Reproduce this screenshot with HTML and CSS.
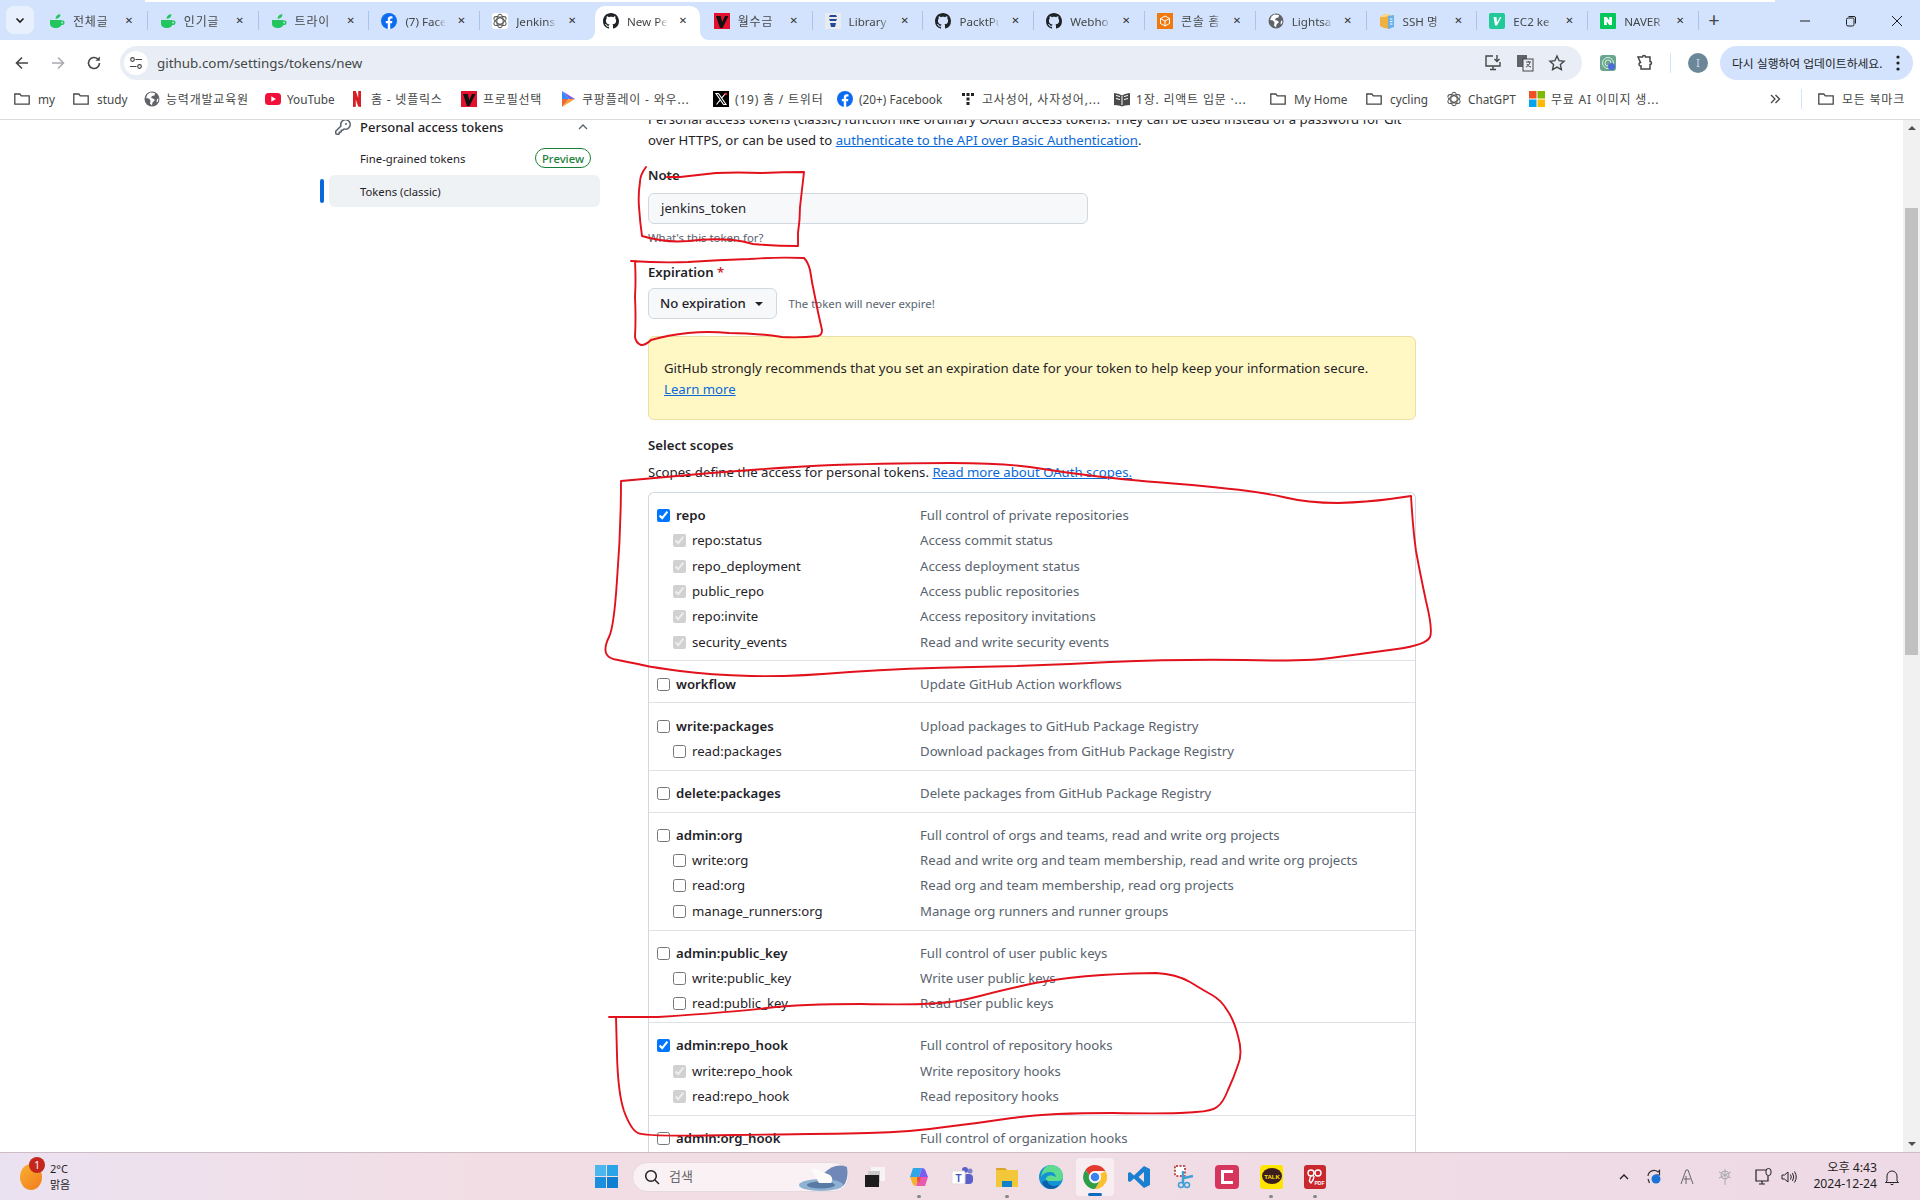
FILE: index.html
```html
<!DOCTYPE html>
<html lang="ko">
<head>
<meta charset="utf-8">
<title>New Personal Access Token</title>
<link rel="stylesheet" href="styles.css">
</head>
<body>
<svg class="defs" width="0" height="0" aria-hidden="true">
  <defs>
    <symbol id="i-gh" viewBox="0 0 16 16"><path fill="#1f2328" d="M8 0c4.42 0 8 3.58 8 8a8.013 8.013 0 0 1-5.45 7.59c-.4.08-.55-.17-.55-.38 0-.27.01-1.13.01-2.2 0-.75-.25-1.23-.54-1.48 1.78-.2 3.65-.88 3.65-3.95 0-.88-.31-1.59-.82-2.15.08-.2.36-1.02-.08-2.12 0 0-.67-.22-2.2.82-.64-.18-1.32-.27-2-.27-.68 0-1.36.09-2 .27-1.53-1.03-2.2-.82-2.2-.82-.44 1.1-.16 1.92-.08 2.12-.51.56-.82 1.28-.82 2.15 0 3.06 1.86 3.75 3.64 3.95-.23.2-.44.55-.51 1.07-.46.21-1.61.55-2.33-.66-.15-.24-.6-.83-1.23-.82-.67.01-.27.38.01.53.34.19.73.9.82 1.13.16.45.68 1.31 2.69.94 0 .67.01 1.3.01 1.49 0 .21-.15.45-.55.38A7.995 7.995 0 0 1 0 8c0-4.42 3.58-8 8-8Z"/></symbol>
    <symbol id="i-fb" viewBox="0 0 16 16"><circle cx="8" cy="8" r="8" fill="#0b6cf0"/><path fill="#fff" d="M11 10.3l.4-2.3H9.2V6.6c0-.7.3-1.2 1.3-1.2h1V3.4s-.9-.2-1.7-.2c-1.9 0-3 1.1-3 3.2V8H4.800v2.300h2v5.600a8 8 0 0 0 2.400 0v-5.600z"/></symbol>
    <symbol id="i-cup" viewBox="0 0 16 16"><path fill="#22c55e" d="M1 7h11.500v3.500c0 2.800-2.200 4.500-5.700 4.500S1 13.300 1 10.500z"/><path fill="none" stroke="#22c55e" stroke-width="1.500" d="M12.500 8.200h1.200c1.500 0 1.500 3-.2 3h-1.500"/><path fill="#22c55e" d="M6.500 5.800C6.500 3 8.500 1.200 11.500 1.200 11.500 4 9.500 5.800 6.500 5.800z"/></symbol>
    <symbol id="i-folder" viewBox="0 0 16 16"><path fill="none" stroke="#444746" stroke-width="1.300" d="M.8 3h5l1.500 1.800h7.900v8.400H.8z"/></symbol>
    <symbol id="i-globe" viewBox="0 0 16 16"><circle cx="8" cy="8" r="7.500" fill="#5f6368"/><path fill="#fff" d="M6 1.500L3.500 3.500 2 7l3 .5 1.500 2L6 12.500l2 2 .5-3 2.500-2.500L9 7.500 7 7l1-2 2.500-.5.500-2.500zM13 8l1.500-.5-.5 3-1.500 1z"/></symbol>
    <symbol id="i-yt" viewBox="0 0 16 16"><rect y="2" width="16" height="12" rx="3.500" fill="#f0103a"/><path fill="#fff" d="M6.300 5.200v5.600L11 8z"/></symbol>
    <symbol id="i-nf" viewBox="0 0 16 16"><path fill="#d81f26" d="M4 0h2.800l2.400 7V0H12v16l-2.800-.4L6.800 8.500v7.300L4 16z"/></symbol>
    <symbol id="i-v" viewBox="0 0 16 16"><rect width="16" height="16" fill="#e3102f"/><path fill="#111" d="M2 3h5v1.500L8.300 9 11 3h3.500L8.500 15H6z"/></symbol>
    <symbol id="i-play" viewBox="0 0 16 16"><path fill="#2e8df5" d="M2 0v8h7z"/><path fill="#7a5cf0" d="M2 0l13 8H9z"/><path fill="#f0683a" d="M2 16V8h7z"/><path fill="#f5a43a" d="M2 16l13-8H9z"/></symbol>
    <symbol id="i-x" viewBox="0 0 16 16"><rect width="16" height="16" fill="#000"/><path fill="none" stroke="#fff" stroke-width="1.100" d="M3 2.500h2.500l7.500 11h-2.500zM12.500 2.500L8.800 6.800M7 9.200l-3.500 4.300"/><circle cx="12.800" cy="3" r="1.300" fill="#e23"/></symbol>
    <symbol id="i-dots" viewBox="0 0 16 16"><g fill="#222"><rect x="2" y="2" width="3" height="3"/><rect x="6.500" y="2" width="3" height="3"/><rect x="11" y="2" width="3" height="3"/><rect x="6.500" y="6.500" width="3" height="3"/><rect x="6.500" y="11" width="3" height="3"/></g></symbol>
    <symbol id="i-book" viewBox="0 0 16 16"><path fill="#4a4a4a" d="M0 2l5 1 3 1.500L11 3l5-1v12l-5 .5-3 1-3-1L0 14z"/><path fill="none" stroke="#fff" stroke-width="1" d="M2 4.500l4 1M2 7.500l4 1M10 5.500l4-1M10 8.500l4-1M8 5v9"/></symbol>
    <symbol id="i-gpt" viewBox="0 0 16 16"><g fill="none" stroke="#555" stroke-width="1.100"><ellipse cx="8" cy="8" rx="3.200" ry="6.800"/><ellipse cx="8" cy="8" rx="3.200" ry="6.800" transform="rotate(60 8 8)"/><ellipse cx="8" cy="8" rx="3.200" ry="6.800" transform="rotate(120 8 8)"/></g></symbol>
    <symbol id="i-ms" viewBox="0 0 16 16"><rect width="7.500" height="7.500" fill="#f25022"/><rect x="8.500" width="7.500" height="7.500" fill="#7fba00"/><rect y="8.500" width="7.500" height="7.500" fill="#00a4ef"/><rect x="8.500" y="8.500" width="7.500" height="7.500" fill="#ffb900"/></symbol>
    <symbol id="i-key" viewBox="0 0 16 16"><path fill="#59636e" d="M10.500 0a5.499 5.499 0 1 1-1.288 10.848l-.932.932a.749.749 0 0 1-.53.22H7v.75a.749.749 0 0 1-.22.53l-.5.5a.749.749 0 0 1-.53.22H5v.75a.749.749 0 0 1-.22.53l-.5.5a.749.749 0 0 1-.53.22h-2A1.750 1.750 0 0 1 0 14.250v-2c0-.199.079-.389.22-.53l4.932-4.932A5.500 5.500 0 0 1 10.500 0Zm-4 5.500c-.001.431.069.86.205 1.269a.75.75 0 0 1-.181.768L1.500 12.560v1.690c0 .138.112.25.25.25h1.690l.06-.06v-1.190a.75.75 0 0 1 .75-.75h1.190l.06-.06v-1.190a.75.75 0 0 1 .75-.75h1.190l1.023-1.025a.75.75 0 0 1 .768-.18A4 4 0 1 0 6.500 5.500ZM11 6a1 1 0 1 1 0-2 1 1 0 0 1 0 2Z"/></symbol>
  </defs>
</svg>

<div class="app">
  <header class="tabstrip">
    <button class="tabs-menu"><svg width="12" height="12" viewBox="0 0 12 12"><path d="M2.500 4.500L6 8l3.500-3.500" fill="none" stroke="#1f1f1f" stroke-width="1.600"/></svg></button>
    <div class="tab"><svg class="fav"><use href="#i-cup"/></svg><span class="tab-title ko">전체글</span><span class="tab-x">✕</span></div>
    <div class="tab"><svg class="fav"><use href="#i-cup"/></svg><span class="tab-title ko">인기글</span><span class="tab-x">✕</span></div>
    <div class="tab"><svg class="fav"><use href="#i-cup"/></svg><span class="tab-title ko">트라이</span><span class="tab-x">✕</span></div>
    <div class="tab"><svg class="fav"><use href="#i-fb"/></svg><span class="tab-title">(7) Face</span><span class="tab-x">✕</span></div>
    <div class="tab no-sep"><span class="fav-bg"><svg class="fav"><use href="#i-gpt"/></svg></span><span class="tab-title">Jenkins</span><span class="tab-x">✕</span></div>
    <div class="tab active no-sep"><span class="tab-shape"></span><svg class="fav"><use href="#i-gh"/></svg><span class="tab-title">New Pe</span><span class="tab-x">✕</span></div>
    <div class="tab"><svg class="fav"><use href="#i-v"/></svg><span class="tab-title ko">월수금</span><span class="tab-x">✕</span></div>
    <div class="tab"><svg class="fav" viewBox="0 0 16 16"><rect width="16" height="16" fill="#e9ecef"/><path fill="#24469b" d="M5 2h6l1 2H4zM4 6h8l-1 2H5zM5 10h6l-1 4H6z"/></svg><span class="tab-title">Library</span><span class="tab-x">✕</span></div>
    <div class="tab"><svg class="fav"><use href="#i-gh"/></svg><span class="tab-title">PacktPu</span><span class="tab-x">✕</span></div>
    <div class="tab"><svg class="fav"><use href="#i-gh"/></svg><span class="tab-title">Webho</span><span class="tab-x">✕</span></div>
    <div class="tab"><svg class="fav" viewBox="0 0 16 16"><rect width="16" height="16" fill="#f0780f"/><path fill="none" stroke="#fff" stroke-width="1" d="M8 3l4.500 2.500v5L8 13l-4.500-2.500v-5zM3.500 5.500L8 8l4.500-2.500M8 8v5"/></svg><span class="tab-title ko">콘솔 홈</span><span class="tab-x">✕</span></div>
    <div class="tab"><svg class="fav"><use href="#i-globe"/></svg><span class="tab-title">Lightsa</span><span class="tab-x">✕</span></div>
    <div class="tab"><svg class="fav" viewBox="0 0 16 16"><path fill="#f0b040" d="M1 4l5-3 5 1v14l-6-1-4-2z"/><path fill="#fcd98a" d="M1 4l5-3 5 1-5 2z"/><path fill="#6ab0e8" d="M9 3l6-1v12l-6 2z"/><path stroke="#fff" fill="none" d="M11 6h2.500M11 8.500h2.500M11 11h2.500"/></svg><span class="tab-title">SSH 명</span><span class="tab-x">✕</span></div>
    <div class="tab"><svg class="fav" viewBox="0 0 16 16"><rect width="16" height="16" rx="2" fill="#20c997"/><path fill="#fff" d="M4.500 4h3l.5 5.500L11 4h1.500L8 12.500H6z"/></svg><span class="tab-title">EC2 ke</span><span class="tab-x">✕</span></div>
    <div class="tab"><svg class="fav" viewBox="0 0 16 16"><rect width="16" height="16" rx="1" fill="#03c75a"/><path fill="#fff" d="M4 4h2.800l2.400 3.500V4H12v8H9.200L6.800 8.500V12H4z"/></svg><span class="tab-title">NAVER</span><span class="tab-x">✕</span></div>
    <span class="tab-new">+</span>
    <div class="window-controls">
      <svg width="12" height="12" viewBox="0 0 12 12"><path d="M1 6h10" stroke="#1f1f1f"/></svg>
      <svg width="12" height="12" viewBox="0 0 12 12"><rect x="1.500" y="3" width="7.500" height="8" rx="1.500" fill="none" stroke="#1f1f1f"/><path d="M3.500 1.500h5.500a1.500 1.500 0 0 1 1.500 1.500v5.500" fill="none" stroke="#1f1f1f"/></svg>
      <svg width="12" height="12" viewBox="0 0 12 12"><path d="M1 1l10 10M11 1L1 11" stroke="#1f1f1f"/></svg>
    </div>
  </header>

  <nav class="toolbar">
    <div class="nav-btns">
      <svg width="16" height="16" viewBox="0 0 16 16"><path d="M14 8H2.500M8 2.500L2.500 8 8 13.500" fill="none" stroke="#444746" stroke-width="1.600"/></svg>
      <svg width="16" height="16" viewBox="0 0 16 16"><path d="M2 8h11.500M8 2.500L13.500 8 8 13.500" fill="none" stroke="#a8abaf" stroke-width="1.600"/></svg>
      <svg width="16" height="16" viewBox="0 0 16 16"><path d="M13.500 8a5.500 5.500 0 1 1-1.700-4" fill="none" stroke="#444746" stroke-width="1.600"/><path d="M13.800 1.500v4.300H9.500z" fill="#444746"/></svg>
    </div>
    <div class="omnibox">
      <span class="site-info"><svg width="14" height="14" viewBox="0 0 14 14"><g fill="none" stroke="#444746" stroke-width="1.200"><circle cx="3.500" cy="3.500" r="1.800"/><path d="M6.500 3.500H13M1 10.500h6.500"/><circle cx="10.500" cy="10.500" r="1.800"/></g></svg></span>
      <span class="url">github.com/settings/tokens/new</span>
      <span class="omni-actions">
        <svg width="18" height="18" viewBox="0 0 18 18"><path d="M9 2H2v10h14V8M6 15.500h6M9 12v3.500" fill="none" stroke="#444746" stroke-width="1.400"/><path d="M13 1v6M10.500 5L13 7.500 15.500 5" fill="none" stroke="#444746" stroke-width="1.400"/></svg>
        <svg width="18" height="18" viewBox="0 0 18 18"><rect x="1" y="1" width="10" height="12" fill="#5f6368"/><rect x="7" y="5" width="10" height="12" fill="#e9eef6" stroke="#444746"/><path d="M10 8h5M12.500 7v1M14 8c-.5 2.500-2 4-4 5M11 10c.5 1.500 2 2.500 4 3" fill="none" stroke="#444746"/></svg>
        <svg width="18" height="18" viewBox="0 0 18 18"><path d="M9 2l2.100 4.700 5 .5-3.700 3.400 1 5L9 13.100 4.600 15.600l1-5L1.900 7.200l5-.5z" fill="none" stroke="#444746" stroke-width="1.400"/></svg>
      </span>
    </div>
    <div class="tool-right">
      <svg class="ext" width="16" height="16" viewBox="0 0 16 16"><rect width="16" height="16" rx="3" fill="#6aa58e"/><g fill="none" stroke="#d8efe6"><circle cx="8" cy="8" r="5.500"/><circle cx="8" cy="8" r="3"/></g><circle cx="11.500" cy="11.500" r="3.500" fill="#4f6bd8"/></svg>
      <svg class="puzzle" width="18" height="18" viewBox="0 0 18 18"><path d="M3 3h4.500c0-2 3-2 3 0H15v4.500c2 0 2 3 0 3V15H6v-3c-2 .5-3-3-.5-3.500L3 3z" fill="none" stroke="#444746" stroke-width="1.500"/></svg>
      <span class="tool-sep"></span>
      <span class="avatar">I</span>
      <span class="update">다시 실행하여 업데이트하세요.<svg width="4" height="16" viewBox="0 0 4 16"><g fill="#1f1f1f"><circle cx="2" cy="2" r="1.600"/><circle cx="2" cy="8" r="1.600"/><circle cx="2" cy="14" r="1.600"/></g></svg></span>
    </div>
  </nav>

  <nav class="bookmarks">
    <span class="bm bm-f"><svg class="fav"><use href="#i-folder"/></svg>my</span>
    <span class="bm bm-f"><svg class="fav"><use href="#i-folder"/></svg>study</span>
    <span class="bm ko"><svg class="fav"><use href="#i-globe"/></svg>능력개발교육원</span>
    <span class="bm"><svg class="fav"><use href="#i-yt"/></svg>YouTube</span>
    <span class="bm ko"><svg class="fav"><use href="#i-nf"/></svg>홈 - 넷플릭스</span>
    <span class="bm ko"><svg class="fav"><use href="#i-v"/></svg>프로필선택</span>
    <span class="bm ko"><svg class="fav"><use href="#i-play"/></svg>쿠팡플레이 - 와우...</span>
    <span class="bm ko"><svg class="fav"><use href="#i-x"/></svg>(19) 홈 / 트위터</span>
    <span class="bm"><svg class="fav"><use href="#i-fb"/></svg>(20+) Facebook</span>
    <span class="bm ko"><svg class="fav"><use href="#i-dots"/></svg>고사성어, 사자성어,...</span>
    <span class="bm ko"><svg class="fav"><use href="#i-book"/></svg>1장. 리액트 입문 ·...</span>
    <span class="bm bm-f"><svg class="fav"><use href="#i-folder"/></svg>My Home</span>
    <span class="bm bm-f"><svg class="fav"><use href="#i-folder"/></svg>cycling</span>
    <span class="bm"><svg class="fav"><use href="#i-gpt"/></svg>ChatGPT</span>
    <span class="bm ko"><svg class="fav"><use href="#i-ms"/></svg>무료 AI 이미지 생...</span>
    <svg class="bm-more" width="12" height="12" viewBox="0 0 12 12"><path d="M2 2l4 4-4 4M6.500 2l4 4-4 4" fill="none" stroke="#444746" stroke-width="1.300"/></svg>
    <span class="bm-sep"></span>
    <span class="bm bm-f ko"><svg class="fav"><use href="#i-folder"/></svg>모든 북마크</span>
  </nav>

  <div class="viewport">
    <main class="page">
      <aside class="sidenav">
        <div class="side-row side-parent">
          <svg class="key"><use href="#i-key"/></svg>
          <span class="side-title">Personal access tokens</span>
          <svg class="chev" width="12" height="12" viewBox="0 0 12 12"><path d="M2 8l4-4 4 4" fill="none" stroke="#59636e" stroke-width="1.300"/></svg>
        </div>
        <div class="side-row">Fine-grained tokens<span class="pill">Preview</span></div>
        <div class="side-row current">Tokens (classic)</div>
      </aside>

      <section class="content">
        <p class="intro">Personal access tokens (classic) function like ordinary OAuth access tokens. They can be used instead of a password for Git<br>over HTTPS, or can be used to <a href="#">authenticate to the API over Basic Authentication</a>.</p>

        <label class="field-label note-label">Note</label>
        <div class="input">jenkins_token</div>
        <p class="hint">What's this token for?</p>

        <label class="field-label exp-label">Expiration <span class="req">*</span></label>
        <div class="exp-row">
          <div class="select">No expiration<span class="caret"></span></div>
          <span class="hint-inline">The token will never expire!</span>
        </div>

        <div class="flash">GitHub strongly recommends that you set an expiration date for your token to help keep your information secure.<br><a href="#">Learn more</a></div>

        <h3 class="scopes-title">Select scopes</h3>
        <p class="scopes-desc">Scopes define the access for personal tokens. <a href="#">Read more about OAuth scopes.</a></p>

        <div class="scopes">
          <div class="group">
            <div class="row head"><span class="name"><input type="checkbox" checked>repo</span><span class="desc">Full control of private repositories</span></div>
            <div class="row sub"><span class="name"><input type="checkbox" checked disabled>repo:status</span><span class="desc">Access commit status</span></div>
            <div class="row sub"><span class="name"><input type="checkbox" checked disabled>repo_deployment</span><span class="desc">Access deployment status</span></div>
            <div class="row sub"><span class="name"><input type="checkbox" checked disabled>public_repo</span><span class="desc">Access public repositories</span></div>
            <div class="row sub"><span class="name"><input type="checkbox" checked disabled>repo:invite</span><span class="desc">Access repository invitations</span></div>
            <div class="row sub"><span class="name"><input type="checkbox" checked disabled>security_events</span><span class="desc">Read and write security events</span></div>
          </div>
          <div class="group">
            <div class="row head"><span class="name"><input type="checkbox">workflow</span><span class="desc">Update GitHub Action workflows</span></div>
          </div>
          <div class="group">
            <div class="row head"><span class="name"><input type="checkbox">write:packages</span><span class="desc">Upload packages to GitHub Package Registry</span></div>
            <div class="row sub"><span class="name"><input type="checkbox">read:packages</span><span class="desc">Download packages from GitHub Package Registry</span></div>
          </div>
          <div class="group">
            <div class="row head"><span class="name"><input type="checkbox">delete:packages</span><span class="desc">Delete packages from GitHub Package Registry</span></div>
          </div>
          <div class="group">
            <div class="row head"><span class="name"><input type="checkbox">admin:org</span><span class="desc">Full control of orgs and teams, read and write org projects</span></div>
            <div class="row sub"><span class="name"><input type="checkbox">write:org</span><span class="desc">Read and write org and team membership, read and write org projects</span></div>
            <div class="row sub"><span class="name"><input type="checkbox">read:org</span><span class="desc">Read org and team membership, read org projects</span></div>
            <div class="row sub"><span class="name"><input type="checkbox">manage_runners:org</span><span class="desc">Manage org runners and runner groups</span></div>
          </div>
          <div class="group">
            <div class="row head"><span class="name"><input type="checkbox">admin:public_key</span><span class="desc">Full control of user public keys</span></div>
            <div class="row sub"><span class="name"><input type="checkbox">write:public_key</span><span class="desc">Write user public keys</span></div>
            <div class="row sub"><span class="name"><input type="checkbox">read:public_key</span><span class="desc">Read user public keys</span></div>
          </div>
          <div class="group">
            <div class="row head"><span class="name"><input type="checkbox" checked>admin:repo_hook</span><span class="desc">Full control of repository hooks</span></div>
            <div class="row sub"><span class="name"><input type="checkbox" checked disabled>write:repo_hook</span><span class="desc">Write repository hooks</span></div>
            <div class="row sub"><span class="name"><input type="checkbox" checked disabled>read:repo_hook</span><span class="desc">Read repository hooks</span></div>
          </div>
          <div class="group">
            <div class="row head"><span class="name"><input type="checkbox">admin:org_hook</span><span class="desc">Full control of organization hooks</span></div>
          </div>
        </div>
      </section>
    </main>
    <div class="scrollbar">
      <span class="arrow-up"></span>
      <span class="thumb"></span>
      <span class="arrow-down"></span>
    </div>
  </div>

  <footer class="taskbar">
    <div class="weather">
      <span class="sun"><span class="badge">1</span></span>
      <span class="weather-text"><span>2°C</span><span>맑음</span></span>
    </div>
    <div class="task-center">
      <svg class="start" width="23" height="23" viewBox="0 0 23 23"><rect width="11" height="11" fill="#4cb6ee"/><rect x="12" width="11" height="11" fill="#2ba3e8"/><rect y="12" width="11" height="11" fill="#1a8fdd"/><rect x="12" y="12" width="11" height="11" fill="#0f7fd3"/></svg>
      <div class="search">
        <svg width="16" height="16" viewBox="0 0 16 16"><circle cx="7" cy="7" r="5.300" fill="none" stroke="#1f1f1f" stroke-width="1.500"/><path d="M11 11l4 4" stroke="#1f1f1f" stroke-width="1.500"/></svg>
        <span class="search-text">검색</span>
        <svg class="bear" width="50" height="30" viewBox="0 0 50 30"><path d="M24 12Q36 0 48 5 50 18 44 24H24z" fill="#7088b8"/><ellipse cx="22" cy="23" rx="22" ry="6" fill="#8fb2d2"/><ellipse cx="22" cy="23" rx="14" ry="3.500" fill="#5a7aa6"/><path d="M12 8q4-3 7 0l12 5q4 4 1 8H20q-3-6-8-13z" fill="#fdfbf8"/></svg>
      </div>
      <div class="apps">
        <span class="app-ico"><svg width="24" height="24" viewBox="0 0 24 24"><rect x="8" y="2" width="14" height="14" fill="#f6f4f5"/><rect x="5" y="6" width="12" height="12" fill="#c9c9c9"/><rect x="2" y="10" width="14" height="12" fill="#1d1d1d"/></svg></span>
        <span class="app-ico running"><svg width="24" height="24" viewBox="0 0 24 24"><path d="M6 3h9l-3 9H3z" fill="#2fa6e8"/><path d="M9 21h9l3-9h-9z" fill="#e85ab0"/><path d="M15 3q3 0 4 4l2 5h-9z" fill="#7a5cf0"/><path d="M9 21q-3 0-4-4l-2-5h9z" fill="#f5b02e"/><path d="M10 12h4l-2 6-2-2z" fill="#f0503a"/></svg></span>
        <span class="app-ico"><svg width="24" height="24" viewBox="0 0 24 24"><circle cx="19" cy="6" r="2.500" fill="#7b83c9"/><circle cx="14" cy="5" r="3" fill="#5b5fc7"/><rect x="12" y="9" width="10" height="10" rx="4" fill="#5b5fc7"/><rect x="1" y="6" width="13" height="13" rx="1.500" fill="#fff" stroke="#ddd"/><text class="teams-t" x="7.500" y="16.500">T</text></svg></span>
        <span class="app-ico running"><svg width="24" height="24" viewBox="0 0 24 24"><path d="M1 3h9l2 2h11v17H1z" fill="#f3c73a"/><path d="M1 3h9l2 2H1z" fill="#d9a52c"/><rect x="7" y="16" width="10" height="6" fill="#0f82c9"/></svg></span>
        <span class="app-ico"><svg width="24" height="24" viewBox="0 0 24 24"><circle cx="12" cy="12" r="12" fill="#1493d4"/><path d="M12 0a12 12 0 0 1 12 12q0 4-5 4H9q-3 0-2-3 3-5 10-1-1-5-6-5-6 0-9 5Q4 0 12 0z" fill="#5ddc8f"/><path d="M8 15q1 6 8 6l4-1q-3 4-8 4-7 0-9-7z" fill="#0c5ea6"/></svg></span>
        <span class="app-ico active-app"><svg width="24" height="24" viewBox="0 0 24 24"><path d="M12 0a12 12 0 0 1 10.400 6H12a6 6 0 0 0-5.700 4L2.400 5A12 12 0 0 1 12 0z" fill="#e33b2e"/><path d="M22.400 6A12 12 0 0 1 12 24l5.200-9a6 6 0 0 0 0-6z" fill="#fbc02d"/><path d="M2.400 5A12 12 0 0 0 12 24l5.200-9A6 6 0 0 1 6.300 10z" fill="#2e9e49"/><circle cx="12" cy="12" r="5.500" fill="#fff"/><circle cx="12" cy="12" r="4.300" fill="#3b82f0"/></svg></span>
        <span class="app-ico"><svg width="24" height="24" viewBox="0 0 24 24"><path d="M17 1l6 3v16l-6 3L7 13.500 3 17l-2-1V8l2-1 4 3.500zM17 7l-5.500 5 5.500 5z" fill="#1a7fd0"/></svg></span>
        <span class="app-ico"><svg width="24" height="24" viewBox="0 0 24 24"><rect x="4" y="1" width="10" height="10" rx="1" fill="#fff" stroke="#c0504d" stroke-width="2" stroke-dasharray="2 1.500"/><path d="M12 6v12M13 13l9-2" stroke="#3fa0d8" stroke-width="2.500" fill="none"/><circle cx="10" cy="20" r="2.500" fill="none" stroke="#3fa0d8" stroke-width="1.500"/><circle cx="16" cy="20" r="2.500" fill="none" stroke="#3fa0d8" stroke-width="1.500"/></svg></span>
        <span class="app-ico"><svg width="24" height="24" viewBox="0 0 24 24"><rect width="24" height="24" rx="4" fill="#d6365c"/><path d="M18 8H9v8h9v3H6V5h12z" fill="#fff"/></svg></span>
        <span class="app-ico running"><svg width="24" height="24" viewBox="0 0 24 24"><rect x="1" width="24" height="24" rx="4" fill="#fee500"/><ellipse cx="13" cy="11" rx="10" ry="8" fill="#3c1e1e"/><text class="talk-t" x="13" y="13.500">TALK</text></svg></span>
        <span class="app-ico running"><svg width="24" height="24" viewBox="0 0 24 24"><rect x="1" width="22" height="24" rx="3" fill="#c8282e"/><g fill="none" stroke="#fff" stroke-width="1.400"><circle cx="8" cy="8" r="3"/><circle cx="15" cy="8" r="3"/><path d="M8 11q-3 5 0 7 3-3 3-7"/></g><text class="pdf-t" x="16.500" y="20">PDF</text></svg></span>
      </div>
    </div>
    <div class="tray">
      <svg class="tray-chev" width="12" height="12" viewBox="0 0 12 12"><path d="M2 8l4-4 4 4" fill="none" stroke="#1f1f1f" stroke-width="1.300"/></svg>
      <svg width="18" height="18" viewBox="0 0 18 18"><path d="M3 8a6 6 0 0 1 10-4l1.500-1.500V7h-4M3 11l1.500 4" fill="none" stroke="#333" stroke-width="1.200"/><circle cx="11" cy="11" r="4.500" fill="#1a73d8"/></svg>
      <svg class="tray-a" width="16" height="18" viewBox="0 0 16 18"><path d="M2 16L7 2h2l5 14M4.500 11h7M7 16V8" fill="none" stroke="#666" stroke-width="1"/></svg>
      <svg class="tray-gem" width="16" height="18" viewBox="0 0 16 18"><g fill="none" stroke="#aaa"><circle cx="8" cy="7" r="4"/><path d="M8 1v16M2 4l12 6M14 4L2 10"/></g></svg>
      <svg class="tray-net" width="20" height="18" viewBox="0 0 20 18"><path d="M12 2H2v11h12V8M5 16h6M8 13v3" fill="none" stroke="#222" stroke-width="1.200"/><rect x="12" y="0.500" width="5" height="7" rx="2.500" fill="#f3dde8" stroke="#222"/></svg>
      <svg class="tray-vol" width="18" height="18" viewBox="0 0 18 18"><path d="M2 7v4h2.500L8 14V4L4.500 7zM10.500 6.500q1.500 2.500 0 5M12.500 5q2.500 4 0 8M14.500 3.500q3.500 5.500 0 11" fill="none" stroke="#222"/></svg>
      <div class="clock"><span>오후 4:43</span><span>2024-12-24</span></div>
      <svg class="bell" width="16" height="18" viewBox="0 0 16 18"><path d="M3 13V8a5 5 0 0 1 10 0v5l1.500 1.500h-13zM6.500 16q1.500 1.500 3 0" fill="none" stroke="#222"/></svg>
    </div>
  </footer>

  <svg class="scribbles" width="1920" height="1200" viewBox="0 0 1920 1200" aria-hidden="true">
    <path d="M646 167Q640 175 640 182Q638 195 639 207Q640 222 642 236Q665 243 688 241Q711 238 733 240Q743 241 753 244Q775 246 798 246L798 233Q800 220 800 207Q802 190 804 172Q782 172 761 173Q738 172 716 173Q698 175 680 177L667 177"/>
    <path d="M631 261Q660 263 688 262Q718 260 749 259Q776 257 804 258Q808 262 810 270Q812 283 815 297Q818 313 822 330Q822 335 818 336Q800 338 782 337Q755 333 729 333Q708 331 688 333Q668 335 651 340Q646 345 641 345Q636 343 635 337Q636 317 635 297Q636 280 635 261"/>
    <path d="M621 481L666 477Q765 468 833 465Q902 463 951 463Q1000 463 1030 467Q1061 472 1094 476Q1127 480 1192 485Q1258 491 1283 497Q1308 503 1338 503Q1368 502 1390 499L1411 496Q1413 530 1416 551Q1420 573 1426 601Q1433 630 1430 637Q1426 645 1397 649Q1368 653 1338 657Q1308 662 1244 660Q1181 659 1110 662Q1039 666 973 667Q907 668 850 672Q792 677 751 676Q710 675 680 671Q649 667 638 664Q627 662 618 660Q608 659 606 653Q604 647 609 637Q614 627 617 580Q621 530 621 481"/>
    <path d="M609 1017L658 1017Q734 1012 767 1008Q801 1004 861 1004Q921 1005 939 1003Q957 1002 980 996Q1002 990 1035 983Q1069 977 1102 975Q1136 973 1156 973Q1176 974 1190 982Q1203 990 1212 995Q1221 1000 1227 1010Q1234 1020 1238 1036Q1243 1053 1238 1065Q1234 1077 1228 1090Q1223 1103 1217 1107Q1212 1111 1196 1112Q1180 1114 1113 1113Q1046 1113 1012 1118Q979 1123 945 1127Q912 1132 868 1133Q823 1134 734 1135Q645 1137 638 1133Q631 1130 624 1111Q618 1093 617 1055L616 1017"/>
  </svg>
</div>
</body>
</html>
```

FILE: styles.css
```css
* { box-sizing: border-box; }
html, body { margin: 0; height: 1200px; overflow: hidden; background: #fff; }
body {
  font-family: "Noto Sans", "Noto Sans CJK KR", sans-serif;
  font-size: 13.2px;
  line-height: 21px;
  color: #1f2328;
}
.defs { position: absolute; }
.app { position: relative; display: flex; flex-direction: column; width: 1920px; height: 1200px; }
.fav { width: 16px; height: 16px; flex: none; }
.ko { font-size: 12px; letter-spacing: .8px; }

/* tab strip */
.tabstrip {
  display: flex; align-items: flex-start; flex: none; height: 40px; padding: 6px 0 0 6px;
  background: linear-gradient(#fff, #fff) 145px 0 / 1630px 2px no-repeat, #d3e3fd;
}
.tabs-menu {
  width: 28px; height: 28px; margin-right: 3px; padding: 0; border: 0; border-radius: 8px; background: #e8f0fe;
  display: flex; align-items: center; justify-content: center; flex: none;
}
.tab {
  position: relative; display: flex; align-items: center; width: 110.8px; height: 30px; padding-left: 12px; flex: none;
  font-size: 11.6px; color: #444746;
}
.tab::after {
  content: ""; position: absolute; right: 0; top: 5px; width: 1px; height: 19px; background: #a9c3ea;
}
.tab.no-sep::after { display: none; }
.tab.active { z-index: 1; }
.tab-shape {
  position: absolute; left: 4px; right: 2px; top: 0; height: 34px; background: #fff; border-radius: 10px 10px 0 0; z-index: -1;
}
.tab-shape::before, .tab-shape::after {
  content: ""; position: absolute; bottom: 0; width: 8px; height: 8px;
}
.tab-shape::before { left: -8px; background: radial-gradient(circle at 0 0, transparent 7.5px, #fff 8px); }
.tab-shape::after { right: -8px; background: radial-gradient(circle at 100% 0, transparent 7.5px, #fff 8px); }
.fav-bg { display: flex; width: 16px; height: 16px; background: #fff; border-radius: 3px; flex: none; }
.tab-title {
  width: 41px; margin-left: 8px; white-space: nowrap; overflow: hidden; flex: none;
  -webkit-mask-image: linear-gradient(90deg, #000 75%, transparent);
  mask-image: linear-gradient(90deg, #000 75%, transparent);
}
.tab-x { width: 12px; margin-left: 9px; font-size: 10px; line-height: 12px; color: #333; text-align: center; font-weight: 700; flex: none; font-family: "DejaVu Sans", sans-serif; }
.tab-new { margin-left: 5px; width: 20px; font-size: 20px; line-height: 28px; text-align: center; color: #444746; flex: none; }
.window-controls { display: flex; gap: 34px; align-items: center; margin-left: auto; height: 30px; padding-right: 17px; }

/* toolbar */
.toolbar {
  display: flex; align-items: center; flex: none; height: 42px; padding: 6px 7px 2px 14px; background: #fff; border-radius: 10px 10px 0 0;
}
.nav-btns { display: flex; gap: 20px; align-items: center; width: 106px; flex: none; }
.omnibox {
  display: flex; align-items: center; width: 1462px; height: 34px; padding: 0 16px 0 4px; background: #e9eef6; border-radius: 17px; flex: none;
}
.site-info { display: flex; align-items: center; justify-content: center; width: 24px; height: 24px; background: #fff; border-radius: 50%; flex: none; }
.url { margin-left: 9px; font-size: 13.4px; color: #444746; }
.omni-actions { display: flex; gap: 14px; margin-left: auto; align-items: center; }
.tool-right { display: flex; align-items: center; flex: 1; padding-left: 18px; }
.puzzle { margin-left: 19px; }
.tool-sep { width: 1px; height: 20px; background: #d3e3fd; margin-left: 17px; }
.avatar {
  display: flex; align-items: center; justify-content: center; width: 20px; height: 20px; margin-left: 17px; border-radius: 50%;
  background: #6c8798; color: #dde; font-size: 10px; line-height: 1;
}
.update {
  display: flex; align-items: center; justify-content: space-between; width: 193px; height: 34px; margin-left: 12px; padding: 0 13px 0 12px;
  background: #d3e3fd; border-radius: 17px; font-size: 11.8px; color: #1f1f1f; white-space: nowrap;
}

/* bookmarks */
.bookmarks {
  display: grid; align-items: center; flex: none; height: 38px; padding: 0 15px 3px 14px; background: #fff; border-bottom: 1px solid #dadce0;
  grid-template-columns: 59px 71px 121px 84px 112px 99px 153px 124px 123px 154px 156px 96px 80px 83px 1fr 20px 33px auto;
  font-size: 11.8px; color: #444746; white-space: nowrap;
}
.bm { display: flex; align-items: center; gap: 6px; }
.bm-f { gap: 8px; }
.bm-more { justify-self: center; }
.bm-sep { justify-self: center; width: 1px; height: 20px; background: #d3e3fd; }

/* viewport */
.viewport { display: flex; flex: 1; min-height: 0; background: #fff; }
.page { display: flex; flex: 1; min-width: 0; overflow: hidden; padding-left: 320px; gap: 48px; }

/* sidebar */
.sidenav { width: 280px; flex: none; margin-top: -9px; padding-left: 9px; }
.side-row {
  position: relative; display: flex; align-items: center; height: 32px; padding: 0 9px 0 31px; margin-bottom: 1px; border-radius: 6px; font-size: 11.3px; color: #1f2328; justify-content: space-between;
}
.side-row:first-child { margin-bottom: -1px; }
.side-parent { font-size: 13px; font-weight: 500; }
.key { position: absolute; left: 6px; top: 8px; width: 16px; height: 16px; }
.side-title { flex: 1; }
.chev { margin-right: 2px; }
.pill {
  display: flex; align-items: center; justify-content: center; width: 56px; height: 20px; border: 1px solid #1a7f37; border-radius: 10px; color: #1a7f37; font-size: 11.3px; font-weight: 500;
}
.current { background: #eff2f5; }
.current::before {
  content: ""; position: absolute; left: -9px; top: 4px; width: 4px; height: 24px; background: #0969da; border-radius: 2px;
}

/* content */
.content { width: 768px; flex: none; margin-top: -11px; }
.content a { color: #0969da; text-decoration: underline; }
.intro { margin: 0; white-space: nowrap; color: #1f2328; font-size: 13.15px; }
.field-label { display: block; font-weight: 600; }
.note-label { margin-top: 14px; }
.input {
  width: 440px; height: 31px; margin-top: 7px; padding: 0 12px; line-height: 29px; background: #f6f8fa; border: 1px solid #d1d9e0; border-radius: 6px;
}
.hint { margin: 5px 0 0; font-size: 11.4px; line-height: 18px; color: #59636e; }
.exp-label { margin-top: 15px; }
.req { color: #d1242f; }
.exp-row { display: flex; align-items: center; gap: 11.5px; margin-top: 5px; }
.select {
  display: flex; align-items: center; width: 129px; height: 31px; padding-left: 11px; background: #f6f8fa; border: 1px solid #d1d9e0; border-radius: 6px; font-weight: 500;
}
.caret { width: 0; height: 0; margin-left: 9px; border: 4px solid transparent; border-top-color: #1f2328; border-bottom: 0; }
.hint-inline { font-size: 11.4px; color: #59636e; }
.flash {
  margin-top: 17px; padding: 21px 15px 19px; background: #fff8c5; border: 1px solid #ecdfa6; border-radius: 6px; line-height: 21px;
}
.scopes-title { margin: 15px 0 0; font-size: 13.2px; line-height: 21px; font-weight: 600; }
.scopes-desc { margin: 6px 0 0; }
.scopes { margin-top: 9px; border: 1px solid #d1d9e0; border-bottom: 0; border-radius: 6px 6px 0 0; }
.group { padding: 10px 0 5.7px; border-bottom: 1px solid #dfe3e8; }
.row { display: grid; grid-template-columns: 271px 1fr; align-items: center; height: 25.3px; }
.name { display: flex; align-items: center; }
.name input { width: 13px; height: 13px; margin: 0; flex: none; }
.head .name { padding-left: 8px; gap: 6px; font-weight: 600; }
.sub .name { padding-left: 24px; gap: 6px; }
.desc { color: #59636e; }

/* scrollbar */
.scrollbar { position: relative; display: flex; flex-direction: column; align-items: center; width: 17px; flex: none; background: #f1f1f1; }
.thumb { width: 13px; height: 447px; margin-top: 78px; background: #c1c1c1; }
.arrow-up, .arrow-down { width: 0; height: 0; border: 4px solid transparent; }
.arrow-up { margin-top: 6px; border-bottom-color: #505050; border-top: 0; }
.arrow-down { margin-top: auto; margin-bottom: 6px; border-top-color: #505050; border-bottom: 0; }

/* taskbar */
.taskbar {
  display: flex; align-items: center; flex: none; height: 48px; border-top: 1px solid #cdbcc4;
  background: linear-gradient(90deg, #ebe2f1 0%, #f2dde4 25%, #f1dde4 50%, #eedae6 100%);
}
.weather { display: flex; align-items: center; width: 595px; flex: none; padding-left: 20px; gap: 8px; }
.sun { position: relative; display: block; width: 22px; height: 26px; border-radius: 50%; background: linear-gradient(135deg, #f8b133, #f27a1a); }
.badge {
  position: absolute; left: 9px; top: -7px; width: 16px; height: 16px; border-radius: 50%; background: #c4261d; color: #fff; font-size: 10px; line-height: 16px; text-align: center;
}
.weather-text { display: flex; flex-direction: column; font-size: 11px; line-height: 16px; color: #1f1f1f; }
.task-center { display: flex; align-items: center; flex: none; }
.start { flex: none; }
.search {
  display: flex; align-items: center; width: 217px; height: 30px; margin-left: 14px; padding-left: 11px; background: #f9f1f4; border: 1px solid #e6d9df; border-radius: 15px; font-size: 13px; color: #666; position: relative;
}
.search-text { margin-left: 9px; }
.bear { margin-left: auto; margin-right: -1px; }
.apps { display: flex; align-items: center; margin-left: 4px; }
.app-ico { position: relative; display: flex; align-items: center; justify-content: center; width: 44px; height: 40px; flex: none; }
.running::after { content: ""; position: absolute; left: 20px; bottom: -1px; width: 4px; height: 3px; border-radius: 2px; background: #888; }
.active-app::before { content: ""; position: absolute; left: 3px; right: 3px; top: 1px; bottom: 1px; background: #f8eef2; border-radius: 4px; }
.active-app svg { position: relative; }
.active-app::after { content: ""; position: absolute; left: 15px; bottom: 1px; width: 14px; height: 3px; border-radius: 2px; background: #0f6cbd; }
.teams-t { font-family: "Liberation Sans", sans-serif; font-size: 10px; font-weight: 700; fill: #4b53bc; text-anchor: middle; }
.talk-t { font-family: "Liberation Sans", sans-serif; font-size: 6px; font-weight: 700; fill: #fee500; text-anchor: middle; }
.pdf-t { font-family: "Liberation Sans", sans-serif; font-size: 5px; font-weight: 700; fill: #fff; text-anchor: middle; }
.tray { display: flex; align-items: center; margin-left: auto; padding-right: 20px; gap: 15px; color: #1f1f1f; }
.tray-a { margin-left: 1px; }
.tray-gem { margin-left: 7px; }
.tray-net { margin-left: 6px; }
.tray-vol { margin-left: -9px; }
.clock { display: flex; flex-direction: column; align-items: flex-end; margin-left: 0; font-size: 12.2px; line-height: 16px; margin-top: -1px; }
.bell { margin-left: -8px; }

/* hand-drawn annotations over the page */
.scribbles { position: absolute; left: 0; top: 0; pointer-events: none; }
.scribbles path { fill: none; stroke: #e2111c; stroke-width: 1.9; stroke-linecap: round; stroke-linejoin: round; }
```
